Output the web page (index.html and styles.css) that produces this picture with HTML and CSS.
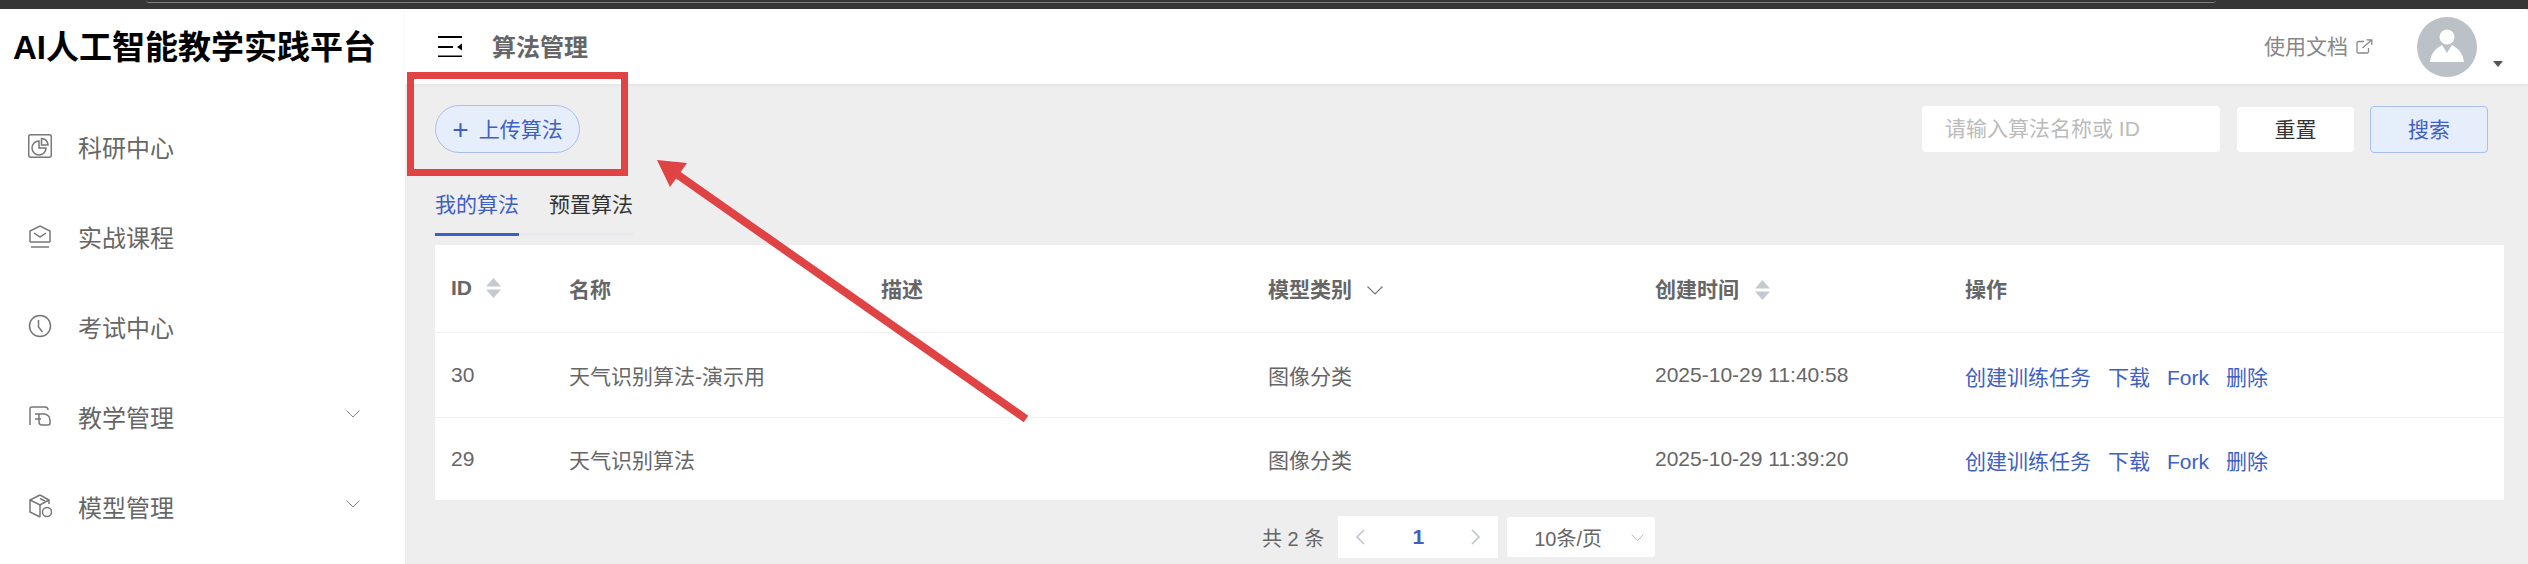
FILE: index.html
```html
<!DOCTYPE html>
<html lang="zh-CN">
  <head>
    <title>算法管理</title>
    <meta charset="UTF-8">
    <link rel="stylesheet" href="styles.css">
  </head>

  <body>
  <div class="browser-bar"><div class="address-line"></div></div>

  <div class="app">
    <!--Left menu-->
    <aside class="sidebar">
      <div class="logo">AI人工智能教学实践平台</div>
      <nav class="menu">
        <div class="menu-item">
          <svg class="menu-icon" viewBox="0 0 24 24"><rect x="0.7" y="0.7" width="22.6" height="22.6" rx="2"/><path d="M11 7a7 7 0 1 0 7 7h-7z"/><path d="M13.5 4.5a6.5 6.5 0 0 1 6.5 6.5h-6.5z"/></svg>
          <span>科研中心</span>
        </div>
        <div class="menu-item">
          <svg class="menu-icon" viewBox="0 0 24 24"><path d="M2 18V7l10-5 10 5v11"/><path d="M2 18h20"/><path d="M6 9l6 4 6-4"/><path d="M3 23h18"/></svg>
          <span>实战课程</span>
        </div>
        <div class="menu-item">
          <svg class="menu-icon" viewBox="0 0 24 24"><circle cx="12" cy="12" r="10.5"/><path d="M10.5 6v7l4 5"/></svg>
          <span>考试中心</span>
        </div>
        <div class="menu-item">
          <svg class="menu-icon" viewBox="0 0 24 24"><path d="M2 21V5a2 2 0 0 1 2-2h13a3 3 0 0 1 3 3"/><path d="M7 10h9a6 6 0 0 1 6 6v3a2 2 0 0 1-2 2h-6a3 3 0 0 1-3-3v-8"/><path d="M7 15h6"/></svg>
          <span>教学管理</span>
          <svg class="menu-arrow" viewBox="0 0 14 8"><path d="M0.5 0.5L7 7l6.5-6.5"/></svg>
        </div>
        <div class="menu-item">
          <svg class="menu-icon" viewBox="0 0 24 24"><path d="M12 1l9 5v4"/><path d="M12 1L2 6v12l10 5"/><path d="M2 6l10 5 9-5"/><path d="M12 11v12"/><path d="M12 4.500l5 2.500"/><circle cx="19" cy="18" r="4.500"/></svg>
          <span>模型管理</span>
          <svg class="menu-arrow" viewBox="0 0 14 8"><path d="M0.5 0.5L7 7l6.5-6.5"/></svg>
        </div>
      </nav>
    </aside>

    <div class="main">
      <!--Top header-->
      <header class="header">
        <svg class="fold-icon" viewBox="0 0 24 21"><path d="M0 0h24v2H0zM0 10h15v2H0zM0 19.500h24v1.500H0zM24 7.500v7l-5-3.500z"/></svg>
        <span class="page-title">算法管理</span>
        <span class="docs-link">使用文档</span>
        <svg class="ext-icon" viewBox="0 0 17 15"><path d="M8 2.500H2.500a1.500 1.500 0 0 0-1.500 1.500v8.500A1.500 1.500 0 0 0 2.500 14H11a1.500 1.500 0 0 0 1.500-1.500V9"/><path d="M6.500 9L15.500 1M10.500 0.800h5.300v5"/></svg>
        <svg class="avatar" viewBox="0 0 60 60"><circle cx="30" cy="30" r="30" fill="#bcc1c8"/><circle cx="30" cy="20" r="7.500" fill="#fff"/><path d="M13 45C14 36 19 31 25 28L30 36 35 28C41 31 46 36 47 45z" fill="#fff"/></svg>
        <span class="user-caret"></span>
      </header>

      <div class="content">
        <div class="toolbar">
          <button class="upload-button"><span class="plus">+</span>上传算法</button>
          <div class="filters">
            <div class="search-input">请输入算法名称或 ID</div>
            <button class="button">重置</button>
            <button class="button button-primary">搜索</button>
          </div>
        </div>

        <div class="tabs">
          <span class="tab tab-active">我的算法</span>
          <span class="tab">预置算法</span>
        </div>

        <table class="algo-table">
          <colgroup>
            <col class="col-id"><col class="col-name"><col class="col-desc"><col class="col-type"><col class="col-time"><col>
          </colgroup>
          <thead>
            <tr>
              <th>ID<svg class="sort-icon sort-id" viewBox="0 0 15 20"><path d="M7.500 0L15 8.500H0zM7.500 20L0 11.500h15z"/></svg></th>
              <th>名称</th>
              <th>描述</th>
              <th>模型类别<svg class="filter-icon" viewBox="0 0 16 9"><path d="M0.500 0.500L8 8l7.500-7.500"/></svg></th>
              <th>创建时间<svg class="sort-icon" viewBox="0 0 15 20"><path d="M7.500 0L15 8.500H0zM7.500 20L0 11.500h15z"/></svg></th>
              <th>操作</th>
            </tr>
          </thead>
          <tbody>
            <tr class="row-first">
              <td>30</td>
              <td>天气识别算法-演示用</td>
              <td></td>
              <td>图像分类</td>
              <td>2025-10-29 11:40:58</td>
              <td class="actions"><a>创建训练任务</a><a>下载</a><a>Fork</a><a>删除</a></td>
            </tr>
            <tr class="row-last">
              <td>29</td>
              <td>天气识别算法</td>
              <td></td>
              <td>图像分类</td>
              <td>2025-10-29 11:39:20</td>
              <td class="actions"><a>创建训练任务</a><a>下载</a><a>Fork</a><a>删除</a></td>
            </tr>
          </tbody>
        </table>

        <!--Pagination-->
        <div class="pager">
          <span class="pager-total">共 2 条</span>
          <div class="pager-box">
            <svg class="pager-arrow" viewBox="0 0 10 16"><path d="M9 1L2 8l7 7"/></svg>
            <span class="pager-current">1</span>
            <svg class="pager-arrow" viewBox="0 0 10 16"><path d="M1 1l7 7-7 7"/></svg>
          </div>
          <div class="pager-select">
            <span>10条/页</span>
            <svg class="select-arrow" viewBox="0 0 13 7"><path d="M0.500 0.500l6 6 6-6"/></svg>
          </div>
        </div>
      </div>
    </div>
  </div>

  <!--Red annotation drawn over the screenshot-->
  <svg class="annotation" viewBox="0 0 2528 564">
    <rect x="410.500" y="75.500" width="214" height="97" fill="none" stroke="#e04343" stroke-width="7"/>
    <path d="M678 175L1026 419" fill="none" stroke="#e04343" stroke-width="8"/>
    <path d="M657 160L687 163 670 187z" fill="#e04343"/>
  </svg>

  </body>
</html>
```

FILE: styles.css
```css
html, body {
  margin: 0;
  height: 564px;
  overflow: hidden;
}
body {
  font-family: "Liberation Sans", "Noto Sans CJK SC", sans-serif;
  background-color: #eeeeee;
  color: #666666;
  position: relative;
}
button {
  font-family: inherit;
}

/* dark strip left of the real page */
.browser-bar {
  height: 9px;
  background-color: #363636;
}
.address-line {
  height: 2px;
  margin-left: 146px;
  width: 2070px;
  border-bottom: 1px solid #808080;
  border-radius: 0 0 6px 6px;
}

.app {
  display: flex;
  height: 555px;
}

/* sidebar */
.sidebar {
  width: 405px;
  flex-shrink: 0;
  background-color: #ffffff;
}
.logo {
  height: 78px;
  line-height: 78px;
  padding-left: 13px;
  font-size: 33px;
  font-weight: bold;
  color: #000000;
  white-space: nowrap;
}
.menu {
  padding-top: 14px;
}
.menu-item {
  display: flex;
  align-items: center;
  height: 90px;
  padding-left: 28px;
  font-size: 24px;
  color: #666666;
}
.menu-icon {
  width: 24px;
  height: 24px;
  margin-right: 26px;
  fill: none;
  stroke: #777777;
  stroke-width: 1.500;
}
.menu-arrow {
  width: 14px;
  height: 8px;
  margin-left: 172px;
  margin-top: -5px;
  fill: none;
  stroke: #888888;
  stroke-width: 1;
}

/* header */
.main {
  flex: 1;
  min-width: 0;
}
.header {
  display: flex;
  align-items: center;
  height: 75px;
  background-color: #ffffff;
  border-top-right-radius: 4px;
  box-shadow: 0 1px 4px rgba(0, 0, 0, 0.06);
}
.fold-icon {
  width: 24px;
  height: 21px;
  margin-left: 33px;
  fill: #000000;
}
.page-title {
  margin-left: 30px;
  margin-bottom: 2px;
  font-size: 24px;
  font-weight: bold;
  color: #666666;
}
.docs-link {
  margin-left: auto;
  margin-bottom: 3px;
  font-size: 21px;
  color: #888888;
}
.ext-icon {
  width: 17px;
  height: 15px;
  margin-left: 8px;
  fill: none;
  stroke: #888888;
  stroke-width: 1.300;
}
.avatar {
  width: 60px;
  height: 60px;
  margin-left: 44px;
}
.user-caret {
  align-self: flex-end;
  margin: 0 25px 17px 16px;
  border-left: 5px solid transparent;
  border-right: 5px solid transparent;
  border-top: 6px solid #555555;
}

/* content */
.content {
  padding: 21px 24px 0 30px;
}
.toolbar {
  display: flex;
  justify-content: space-between;
  height: 48px;
  padding-right: 16px;
}
.upload-button {
  width: 145px;
  height: 48px;
  padding: 0 0 2px;
  border: 1px solid #a9c0ea;
  border-radius: 24px;
  background-color: #e6edfb;
  color: #3e5fc4;
  font-size: 21px;
}
.plus {
  font-size: 28px;
  font-weight: normal;
  margin-right: 10px;
  line-height: 20px;
  vertical-align: -2px;
}
.filters {
  display: flex;
  align-items: center;
}
.search-input {
  width: 275px;
  height: 46px;
  line-height: 46px;
  padding-left: 23px;
  background-color: #ffffff;
  border-radius: 4px;
  font-size: 21px;
  color: #bbbbbb;
}
.button {
  width: 117px;
  height: 45px;
  margin-left: 17px;
  padding: 0 0 2px;
  border: none;
  border-radius: 4px;
  background-color: #ffffff;
  color: #333333;
  font-size: 21px;
}
.button-primary {
  width: 118px;
  height: 47px;
  margin-left: 16px;
  border: 1px solid #a9c0ea;
  background-color: #e6edfb;
  color: #3e5fc4;
}

/* tabs */
.tabs {
  display: inline-flex;
  gap: 30px;
  margin-top: 37px;
  border-bottom: 3px solid #e6e9ef;
  vertical-align: top;
}
.tab {
  height: 43px;
  line-height: 30px;
  font-size: 21px;
  color: #333333;
}
.tab-active {
  color: #3e5fc4;
  box-shadow: 0 3px 0 #3e5fc4;
}

/* table */
.algo-table {
  display: table;
  width: 2069px;
  margin-top: 9px;
  table-layout: fixed;
  border-collapse: collapse;
  background-color: #ffffff;
  font-size: 21px;
}
.col-id { width: 118px; }
.col-name { width: 312px; }
.col-desc { width: 387px; }
.col-type { width: 387px; }
.col-time { width: 310px; }
.algo-table th {
  height: 85px;
  padding: 0 0 2px 16px;
  text-align: left;
  font-weight: bold;
  color: #666666;
  border-bottom: 1px solid #f0f0f0;
}
.algo-table td {
  padding: 0 0 0 16px;
  white-space: nowrap;
  color: #666666;
}
.row-first td {
  height: 82px;
  border-bottom: 1px solid #f0f0f0;
}
.row-last td {
  height: 80px;
}
.sort-icon {
  width: 15px;
  height: 20px;
  margin-left: 16px;
  vertical-align: -3px;
  fill: #c5cad1;
}
.sort-id {
  margin-left: 14px;
}
.filter-icon {
  width: 16px;
  height: 9px;
  margin-left: 15px;
  vertical-align: 2px;
  fill: none;
  stroke: #777777;
  stroke-width: 1.200;
}
.algo-table .actions {
  padding-top: 2px;
}
.actions a {
  margin-right: 17px;
  color: #3e5fc4;
}

/* pagination */
.pager {
  display: flex;
  align-items: center;
  margin-top: 16px;
  padding-left: 827px;
}
.pager-total {
  font-size: 20px;
  color: #666666;
  margin-right: 14px;
}
.pager-box {
  display: flex;
  align-items: center;
  justify-content: space-between;
  width: 160px;
  height: 42px;
  padding: 0 17px;
  box-sizing: border-box;
  background-color: #ffffff;
}
.pager-arrow {
  width: 10px;
  height: 16px;
  fill: none;
  stroke: #bcc3ce;
  stroke-width: 1.500;
}
.pager-current {
  font-size: 21px;
  font-weight: bold;
  color: #3e5fc4;
}
.pager-select {
  display: flex;
  align-items: center;
  width: 148px;
  height: 40px;
  margin-left: 9px;
  padding-left: 27px;
  box-sizing: border-box;
  background-color: #ffffff;
  border-radius: 3px;
  font-size: 20px;
  color: #666666;
}
.select-arrow {
  width: 13px;
  height: 7px;
  margin-left: 29px;
  fill: none;
  stroke: #bbbbbb;
  stroke-width: 1;
}

/* red box and arrow on top of everything */
.annotation {
  position: absolute;
  left: 0;
  top: 0;
  width: 2528px;
  height: 564px;
  pointer-events: none;
}
```
